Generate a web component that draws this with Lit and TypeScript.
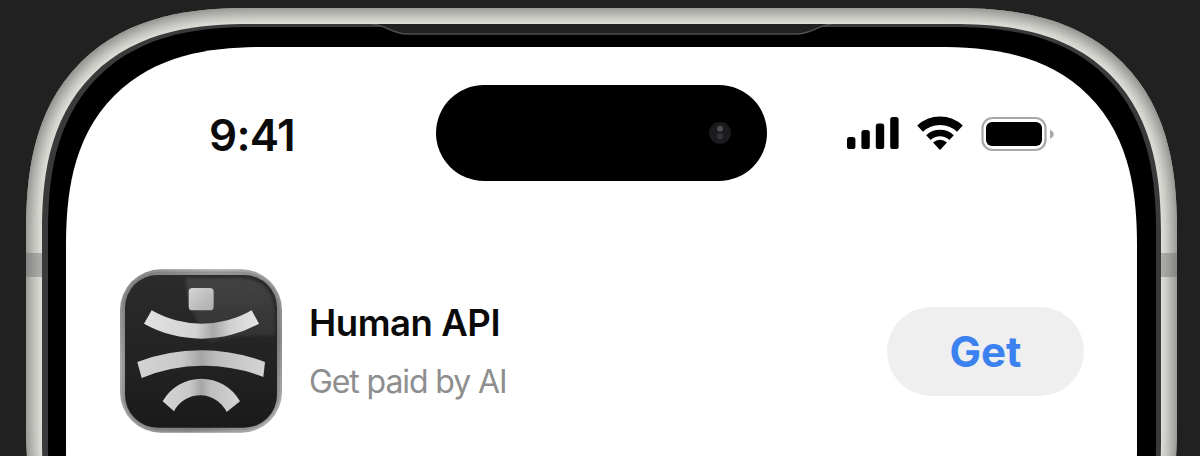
import { LitElement, html, css } from "lit";
import { customElement } from "lit/decorators.js";

const appIcon = html`<svg class="app-icon" viewBox="60 42 486 490" aria-label="Human API icon">
  <defs>
    <linearGradient id="ring" x1="0" y1="0" x2="1" y2="1">
      <stop offset="0" stop-color="#808080"/><stop offset=".3" stop-color="#ababab"/>
      <stop offset=".7" stop-color="#8a8a8a"/><stop offset="1" stop-color="#b8b8b8"/>
    </linearGradient>
    <linearGradient id="base" x1="0" y1="0" x2="0" y2="1">
      <stop offset="0" stop-color="#2b2b2b"/><stop offset=".55" stop-color="#232323"/>
      <stop offset="1" stop-color="#1a1a1a"/>
    </linearGradient>
    <linearGradient id="sheen" x1="0" y1="0" x2="0" y2="1">
      <stop offset="0" stop-color="#505050"/><stop offset="1" stop-color="#383836"/>
    </linearGradient>
    <linearGradient id="steel" x1="0" y1="0" x2="1" y2="0">
      <stop offset="0" stop-color="#d4d4d4"/><stop offset=".35" stop-color="#c8c8c8"/>
      <stop offset=".5" stop-color="#a6a6a6"/><stop offset=".62" stop-color="#bebebe"/>
      <stop offset="1" stop-color="#d4d4d4"/>
    </linearGradient>
    <linearGradient id="steelTop" x1="0" y1="0" x2="1" y2="0">
      <stop offset="0" stop-color="#e2e2e2"/><stop offset=".45" stop-color="#d2d2d2"/>
      <stop offset=".6" stop-color="#a8a8a8"/><stop offset=".75" stop-color="#d0d0d0"/>
      <stop offset="1" stop-color="#e6e6e6"/>
    </linearGradient>
    <linearGradient id="cap" x1="0" y1="0" x2="1" y2="1">
      <stop offset="0" stop-color="#d4d4d4"/><stop offset="1" stop-color="#adadad"/>
    </linearGradient>
    <filter id="soft" x="-10%" y="-10%" width="120%" height="120%"><feGaussianBlur stdDeviation="4"/></filter>
  </defs>
  <rect x="60" y="42" width="486" height="490" rx="122" fill="url(#ring)"/>
  <rect x="67" y="49" width="472" height="476" rx="114" fill="#4c4c4c" opacity=".22"/>
  <rect x="75" y="59" width="456" height="458" rx="98" fill="url(#base)"/>
  <path d="M258 68H420Q520 72 524 170V240Q400 240 330 262Q262 170 258 68Z" fill="url(#sheen)" opacity=".65" filter="url(#soft)"/>
  <rect x="266" y="98" width="75" height="67" rx="11" fill="url(#cap)"/>
  <path d="M155 165A301 301 0 0 0 455 165L477 205A353 353 0 0 1 132 205Z" fill="url(#steelTop)"/>
  <path d="M112 320A541 541 0 0 1 495 320L490 365A493 493 0 0 0 125 368Z" fill="url(#steel)"/>
  <path d="M188 438A133 133 0 0 1 420 438L380 470A88 88 0 0 0 222 468Z" fill="url(#steel)"/>
</svg>`;

@customElement("app-root")
export class AppRoot extends LitElement {
  static styles = css`
    :host {
      display: block;
      width: 1200px;
      height: 456px;
      overflow: hidden;
      background: #212121;
      font-family: Inter, "Liberation Sans", sans-serif;
    }
    .metal, .band, .black, .screen { corner-shape: superellipse(1.32); }
    .metal {
      position: relative;
      box-sizing: border-box;
      width: 1151px;
      height: 640px;
      margin: 8px 0 0 26px;
      padding: 16px 16px 0;
      border-radius: 225px;
      background: #ecece6;
      box-shadow: inset 0 0 20px 4px #6e6e6c;
    }
    .side-key {
      position: absolute;
      top: 245px;
      width: 16px;
      height: 24px;
      background: rgba(105, 105, 105, 0.42);
    }
    .side-key.left { left: 0; }
    .side-key.right { right: 0; }
    .band {
      position: relative;
      height: 100%;
      box-sizing: border-box;
      padding: 3px 5px 0 6px;
      border-radius: 209px;
      background: #3a3a3a;
    }
    .notch {
      position: absolute;
      left: 330px;
      top: 0;
      width: 460px;
      height: 16px;
      z-index: 1;
    }
    .black {
      height: 100%;
      box-sizing: border-box;
      padding: 20px 19px 0 18px;
      border-radius: 206px;
      background: #000;
    }
    .screen {
      position: relative;
      z-index: 2;
      height: 100%;
      box-sizing: border-box;
      padding: 38px 53px 0 54px;
      border-radius: 200px;
      background: #fff;
    }
    .status {
      display: flex;
      align-items: center;
      padding-left: 89px;
    }
    .time {
      width: 227px;
      margin-top: 4px;
      font-size: 44px;
      font-weight: 600;
      letter-spacing: -0.7px;
      line-height: 1;
      color: #0b0b0b;
    }
    .island {
      display: flex;
      align-items: center;
      justify-content: flex-end;
      box-sizing: border-box;
      width: 331px;
      height: 96px;
      padding-right: 35px;
      border-radius: 48px;
      background: #000;
    }
    .camera { width: 24px; height: 24px; display: block; }
    .indicators {
      display: flex;
      align-items: center;
      margin-left: 80px;
    }
    .indicators svg { display: block; }
    .wifi { margin-left: 18px; }
    .battery { margin: 2px 0 0 18px; }
    .app-row {
      display: flex;
      align-items: center;
      margin-top: 88px;
    }
    .app-icon { display: block; width: 162px; height: 164px; flex: none; }
    .meta {
      display: flex;
      flex-direction: column;
      gap: 18px;
      margin-left: 27px;
      padding-top: 1px;
    }
    .name {
      font-size: 36.5px;
      font-weight: 560;
      letter-spacing: -0.45px;
      line-height: 42px;
      color: #0a0a0a;
    }
    .tagline {
      font-size: 32px;
      font-weight: 400;
      letter-spacing: -1.1px;
      line-height: 40px;
      color: #8e8e8e;
    }
    .get {
      display: flex;
      align-items: center;
      justify-content: center;
      margin-left: auto;
      width: 197px;
      height: 89px;
      border-radius: 45px;
      background: #efefef;
      font-size: 42px;
      font-weight: 700;
      color: #3b82f0;
    }
  `;

  render() {
    return html`
      <div class="metal">
        <div class="side-key left"></div>
        <div class="side-key right"></div>
        <div class="band">
          <svg class="notch" viewBox="0 0 460 16" preserveAspectRatio="none">
            <path d="M0 0C14 1 20 10 36 10H424C440 10 446 1 460 0Z" fill="#212121"/>
            <path d="M0 0C14 1 20 10 36 10H424C440 10 446 1 460 0" fill="none" stroke="#505050" stroke-width="1.5"/>
          </svg>
          <div class="black">
            <div class="screen">
              <div class="status">
                <div class="time">9:41</div>
                <div class="island">
                  <svg class="camera" viewBox="0 0 24 24">
                    <circle cx="12" cy="12" r="11" fill="#1b1b1e"/>
                    <circle cx="12" cy="7.8" r="3" fill="#4e4e52"/>
                    <circle cx="12" cy="15.6" r="3" fill="#343438"/>
                  </svg>
                </div>
                <div class="indicators">
                  <svg width="52" height="34" viewBox="0 0 52 34" fill="#000">
                    <rect x="0" y="21" width="8.4" height="12" rx="2.6"/>
                    <rect x="14.4" y="14" width="8.4" height="19" rx="2.6"/>
                    <rect x="28.8" y="7.5" width="8.4" height="25.5" rx="2.6"/>
                    <rect x="43.2" y="1" width="8.4" height="32" rx="2.6"/>
                  </svg>
                  <svg class="wifi" width="46" height="34" viewBox="0 0 46 34" fill="none" stroke="#000">
                    <path d="M23 34L16 26.5A10.3 10.3 0 0 1 30 26.5Z" fill="#000" stroke="none"/>
                    <path d="M11.4 21.6A17 17 0 0 1 34.6 21.6" stroke-width="6.6"/>
                    <path d="M3.1 12.65A29.2 29.2 0 0 1 42.9 12.65" stroke-width="8.5"/>
                  </svg>
                  <svg class="battery" width="74" height="36" viewBox="0 0 74 36">
                    <rect x="1.5" y="2" width="63" height="32" rx="10" fill="none" stroke="#a8a8a8" stroke-width="2.2"/>
                    <rect x="5" y="6" width="56" height="24" rx="6" fill="#000"/>
                    <path d="M69 13.5L72.6 16.5V20L69 23Z" fill="#a8a8a8"/>
                  </svg>
                </div>
              </div>
              <div class="app-row">
                ${appIcon}
                <div class="meta">
                  <div class="name">Human API</div>
                  <div class="tagline">Get paid by AI</div>
                </div>
                <div class="get">Get</div>
              </div>
            </div>
          </div>
        </div>
      </div>
    `;
  }
}
